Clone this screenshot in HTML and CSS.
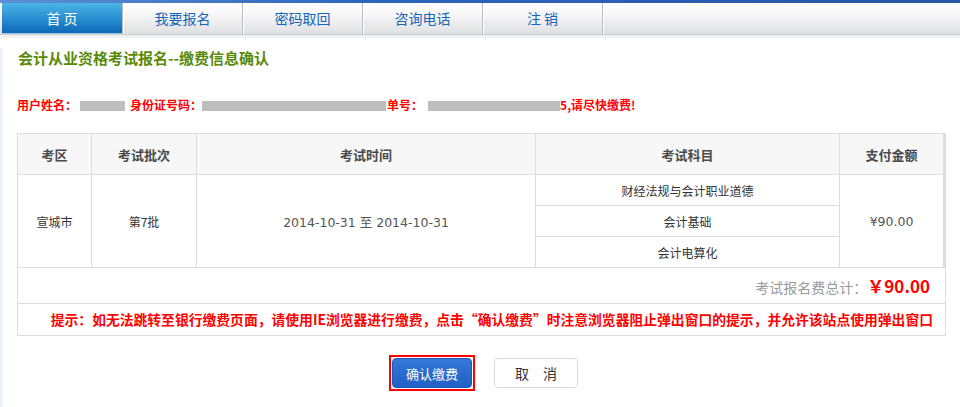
FILE: index.html
```html
<!DOCTYPE html>
<html lang="zh-CN">
<head>
 <meta charset="utf-8"/>
 <title>缴费信息确认</title>
<link rel="stylesheet" href="styles.css">
</head>
<body>
<div class="topline"></div>
<div class="nav">
 <a class="tab active">首 页</a>
 <a class="tab">我要报名</a>
 <a class="tab">密码取回</a>
 <a class="tab">咨询电话</a>
 <a class="tab">注 销</a>
 <span class="tab-rest"></span>
</div>
<div class="navgap"></div>

<div class="main">
 <h2 class="title">会计从业资格考试报名--缴费信息确认</h2>

 <p class="info">用户姓名：<span class="mask m1"></span>身份证号码：<span class="mask m2"></span>单号：<span class="mask m3"></span>5,请尽快缴费!</p>

 <div class="paybox">
 <table class="data">
  <tr>
   <th class="c1">考区</th>
   <th class="c2">考试批次</th>
   <th class="c3">考试时间</th>
   <th class="c4">考试科目</th>
   <th class="c5">支付金额</th>
  </tr>
  <tr>
   <td rowspan="3">宣城市</td>
   <td rowspan="3">第7批</td>
   <td rowspan="3" class="date">2014-10-31 至 2014-10-31</td>
   <td>财经法规与会计职业道德</td>
   <td rowspan="3" class="money c5">¥90.00</td>
  </tr>
  <tr> <td>会计基础</td> </tr>
  <tr> <td>会计电算化</td> </tr>
 </table>
 <div class="total">考试报名费总计：<b>￥90.00</b></div>
 <div class="tip">提示：如无法跳转至银行缴费页面，请使用IE浏览器进行缴费，点击“确认缴费”时注意浏览器阻止弹出窗口的提示，并允许该站点使用弹出窗口</div>
 </div>

 <div class="buttons">
  <span class="focus"><button class="btn ok">确认缴费</button></span>
  <button class="btn cancel">取　消</button>
 </div>
</div>
</body>
</html>
```

FILE: styles.css
```css
body {
 margin: 0;
 font-family: "Noto Sans CJK SC", "DejaVu Sans", sans-serif;
 font-size: 13px;
 color: #333;
 background: #fff;
}

.topline {
 height: 3px;
 background: linear-gradient(to right, #5c8fd6, #2d63b8 40%, #2a56a6);
}

.nav {
 display: flex;
 height: 31px;
 padding-left: 2px;
 background: linear-gradient(#ffffff, #f6f6f7 40%, #dedfe2);
 border-bottom: 1px solid #cdced2;
}

.tab {
 width: 120px;
 box-sizing: border-box;
 text-align: center;
 line-height: 31px;
 font-size: 14px;
 color: #1565b8;
 border-left: 1px solid #bcbcbc;
 box-shadow: inset 1px 0 #fff;
}

.tab.active {
 border-left: none;
 box-shadow: none;
 color: #fff;
 background: linear-gradient(#4db5e6, #2a8fd2 50%, #0b69b6);
 border-bottom: 1px solid #9cc9ec;
 height: 31px;
}

.tab-rest {
 flex: 1;
 border-left: 1px solid #bcbcbc;
 box-shadow: inset 1px 0 #fff;
}

.navgap {
 height: 3px;
 background: #f0f1f3;
}

.main {
 border-left: 3px solid #edf1f8;
 padding: 0 14px 20px 14px;
 min-height: 340px;
}

.title {
 margin: 10px 0 0 1px;
 font-size: 15px;
 line-height: 20px;
 color: #5a8a0a;
 font-weight: bold;
}

.info {
 margin: 29px 0 0 0;
 font-size: 12px;
 line-height: 16px;
 font-weight: bold;
 color: #f00;
}

.mask {
 display: inline-block;
 height: 10px;
 background: #bebebe;
 vertical-align: -1px;
}
.m1 { width: 45px; margin: 0 5px 0 3px; }
.m2 { width: 184px; margin-right: 1px; }
.m3 { width: 132px; margin-left: 5px; }

.paybox {
 margin-top: 20px;
 width: 929px;
 box-sizing: border-box;
 border: 1px solid #dddddd;
 border-top: none;
}

.data {
 border-collapse: collapse;
 margin: 0 0 0 -1px;
 width: 929px;
}

.data th, .data td {
 border: 1px solid #dddddd;
 text-align: center;
 padding: 0;
}

.data th {
 height: 40px;
 background: #f7f7f7;
 font-size: 13px;
 font-weight: bold;
 color: #4a4a4a;
}

.data td {
 height: 30px;
 font-size: 12px;
 color: #333;
}

.data .c1 { width: 73px; }
.data .c2 { width: 104px; }
.data .c3 { width: 338px; }
.data .c4 { width: 303px; }
.data .c5 { border-right: 3px solid #dddddd; }

.data .date, .data .money {
 font-family: "DejaVu Sans", "Noto Sans CJK SC", sans-serif;
 font-size: 12.5px;
 color: #555;
}

.total {
 height: 35px;
 line-height: 35px;
 text-align: right;
 padding-right: 15px;
 border-bottom: 1px solid #dddddd;
 font-size: 14px;
 color: #999;
}

.total b {
 color: #f00;
 font-size: 17px;
}

.tip {
 height: 31px;
 line-height: 31px;
 text-align: right;
 padding-right: 12px;
 font-size: 13.8px;
 font-weight: bold;
 color: #f00;
 white-space: nowrap;
}

.buttons {
 display: flex;
 justify-content: center;
 align-items: center;
 gap: 19px;
 margin-top: 19px;
 padding-left: 4px;
}

.focus {
 display: block;
 border: 2px solid #f00;
 padding: 1px;
 line-height: 0;
}

.btn {
 font-family: "Noto Sans CJK SC", sans-serif;
 font-size: 13px;
 border-radius: 4px;
 cursor: pointer;
}

.btn.ok {
 width: 80px;
 height: 30px;
 color: #fff;
 border: 1px solid #2058b6;
 background: linear-gradient(#3478d8, #2160c4);
}

.btn.cancel {
 width: 84px;
 height: 30px;
 color: #333;
 font-size: 14px;
 background: #fff;
 border: 1px solid #dcdcdc;
}
```
